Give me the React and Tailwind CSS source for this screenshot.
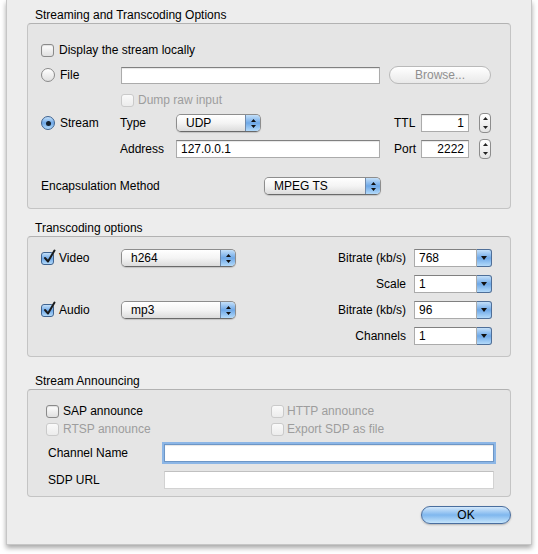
import clsx from "clsx";

const aquaBlue = "bg-linear-to-b from-[#c4e0f9] via-[#6ea8e7] to-[#b3dafa]";
const dimText = "text-[#9d9d9d]";

function Check({ checked, disabled }) {
  return (
    <span
      className={clsx(
        "relative block w-[13px] h-[13px] shrink-0 rounded-[3px] border",
        checked
          ? clsx("border-[#3f6390]", aquaBlue)
          : disabled
          ? "border-[#cacaca] bg-linear-to-b from-[#fafafa] to-[#ececec]"
          : "border-[#8a8a8a] bg-linear-to-b from-white to-[#e0e0e0] shadow-[inset_0_1px_1px_rgba(0,0,0,0.12)]"
      )}
    >
      {checked && (
        <svg className="absolute -top-[4px] left-[1px]" width="13" height="15" viewBox="0 0 13 15">
          <path d="M2 9 L5 12.5 L11.5 1.5" fill="none" stroke="#1b1b1b" strokeWidth="2" strokeLinecap="round" strokeLinejoin="round" />
        </svg>
      )}
    </span>
  );
}

function Radio({ on }) {
  return (
    <span
      className={clsx(
        "flex items-center justify-center w-[14px] h-[14px] shrink-0 rounded-full border",
        on ? clsx("border-[#3f6390]", aquaBlue) : "border-[#8a8a8a] bg-linear-to-b from-white to-[#e0e0e0]"
      )}
    >
      {on && <span className="w-[5px] h-[5px] rounded-full bg-[#15212e]" />}
    </span>
  );
}

function Field({ value, className, right, focus }) {
  return (
    <div
      className={clsx(
        "flex items-center bg-white border px-[4px] shadow-[inset_0_1px_1px_rgba(0,0,0,0.1)]",
        focus ? "border-[#6d96c6] ring-2 ring-[#8cb6e6]" : "border-[#ababab] border-t-[#808080]",
        right && "justify-end",
        className
      )}
    >
      {value}
    </div>
  );
}

function UpDown() {
  return (
    <svg width="5" height="9" viewBox="0 0 5 9">
      <path d="M2.5 0 L5 3 L0 3Z M0 6 L5 6 L2.5 9Z" fill="#111" />
    </svg>
  );
}

function Popup({ value, className }) {
  return (
    <div
      className={clsx(
        "flex h-[18px] rounded-[5px] border border-[#8d8d8d] border-b-[#6a6a6a] overflow-hidden shadow-[0_1px_1px_rgba(0,0,0,0.15)]",
        className
      )}
    >
      <div className="flex-1 flex items-center pl-[9px] bg-linear-to-b from-white via-[#f4f4f4] to-[#dcdcdc]">{value}</div>
      <div className={clsx("w-[15px] flex items-center justify-center border-l border-[#6f89aa]", aquaBlue)}>
        <UpDown />
      </div>
    </div>
  );
}

function Combo({ value }) {
  return (
    <div className="flex h-[18px] w-[78px]">
      <div className="flex-1 flex items-center pl-[4px] bg-white border border-[#ababab] border-t-[#808080]">{value}</div>
      <div className={clsx("w-[15px] flex items-center justify-center rounded-r-[3px] border border-l-0 border-[#4f6f98]", aquaBlue)}>
        <svg width="6" height="4" viewBox="0 0 6 4">
          <path d="M0 0 L6 0 L3 4Z" fill="#111" />
        </svg>
      </div>
    </div>
  );
}

function Stepper() {
  return (
    <div className="flex flex-col items-center justify-between w-[12px] h-[20px] py-[3px] rounded-[4px] border border-[#8d8d8d] bg-linear-to-b from-white to-[#e4e4e4]">
      <svg width="5" height="3" viewBox="0 0 5 3">
        <path d="M2.5 0 L5 3 L0 3Z" fill="#222" />
      </svg>
      <svg width="5" height="3" viewBox="0 0 5 3">
        <path d="M0 0 L5 0 L2.5 3Z" fill="#222" />
      </svg>
    </div>
  );
}

function GroupTitle({ children, className }) {
  return <div className={clsx("h-[16px] pl-[8px] leading-[16px]", className)}>{children}</div>;
}

function GroupBox({ className, children }) {
  return (
    <div className={clsx("rounded-[4px] border border-[#c4c4c4] border-t-[#b2b2b2] bg-[#e5e5e5]", className)}>
      {children}
    </div>
  );
}

export default function App() {
  return (
    <div className="w-[538px] h-[554px] bg-white overflow-hidden font-['Liberation_Sans',Arial,sans-serif] text-[12px] text-black">
      <div className="ml-[6px] w-[526px] h-[545px] bg-[#ededed] border-x border-b border-[#c6c6c6] px-[20px] pt-[7px] shadow-[0_3px_5px_rgba(0,0,0,0.35)]">
        {/* Streaming and Transcoding Options */}
        <GroupTitle>Streaming and Transcoding Options</GroupTitle>
        <GroupBox className="h-[186px] pl-[13px] pr-[19px] pt-[16px] flex flex-col">
          <div className="flex items-center h-[20px] gap-[5px]">
            <Check />
            <span>Display the stream locally</span>
          </div>
          <div className="mt-[5px] flex items-center h-[20px]">
            <div className="w-[80px] flex items-center gap-[5px]">
              <Radio />
              <span>File</span>
            </div>
            <Field className="w-[259px] h-[17px]" />
            <div className="ml-[9px] w-[102px] h-[18px] rounded-full border border-[#b9b9b9] bg-linear-to-b from-white to-[#e9e9e9] flex items-center justify-center text-[#8f8f8f]">
              Browse...
            </div>
          </div>
          <div className="mt-[5px] flex items-center h-[20px] pl-[80px] gap-[4px]">
            <Check disabled />
            <span className={dimText}>Dump raw input</span>
          </div>
          <div className="mt-[3px] flex items-center h-[20px]">
            <div className="w-[79px] flex items-center gap-[5px]">
              <Radio on />
              <span>Stream</span>
            </div>
            <span className="w-[56px]">Type</span>
            <Popup value="UDP" className="w-[85px]" />
            <div className="flex-1" />
            <span className="w-[27px]">TTL</span>
            <Field value="1" right className="w-[48px] h-[18px]" />
            <div className="ml-[10px]">
              <Stepper />
            </div>
          </div>
          <div className="mt-[6px] flex items-center h-[20px] pl-[79px]">
            <span className="w-[56px]">Address</span>
            <Field value="127.0.0.1" className="w-[204px] h-[18px]" />
            <div className="flex-1" />
            <span className="w-[27px]">Port</span>
            <Field value="2222" right className="w-[48px] h-[18px]" />
            <div className="ml-[10px]">
              <Stepper />
            </div>
          </div>
          <div className="mt-[17px] flex items-center h-[20px]">
            <span className="w-[223px]">Encapsulation Method</span>
            <Popup value="MPEG TS" className="w-[117px]" />
          </div>
        </GroupBox>

        {/* Transcoding options */}
        <GroupTitle className="mt-[11px]">Transcoding options</GroupTitle>
        <GroupBox className="h-[121px] pl-[13px] pr-[18px] pt-[8px]">
          <div className="grid grid-cols-[80px_115px_1fr_78px] grid-rows-[repeat(4,26px)] items-center">
            <div className="flex items-center gap-[5px]">
              <Check checked />
              <span>Video</span>
            </div>
            <Popup value="h264" />
            <span className="text-right pr-[8px]">Bitrate (kb/s)</span>
            <Combo value="768" />

            <div />
            <div />
            <span className="text-right pr-[8px]">Scale</span>
            <Combo value="1" />

            <div className="flex items-center gap-[5px]">
              <Check checked />
              <span>Audio</span>
            </div>
            <Popup value="mp3" />
            <span className="text-right pr-[8px]">Bitrate (kb/s)</span>
            <Combo value="96" />

            <div />
            <div />
            <span className="text-right pr-[8px]">Channels</span>
            <Combo value="1" />
          </div>
        </GroupBox>

        {/* Stream Announcing */}
        <GroupTitle className="mt-[16px]">Stream Announcing</GroupTitle>
        <GroupBox className="h-[108px] pl-[18px] pr-[15px] pt-[12px] flex flex-col">
          <div className="flex items-center h-[18px]">
            <div className="w-[225px] flex items-center gap-[4px]">
              <Check />
              <span>SAP announce</span>
            </div>
            <div className="flex items-center gap-[3px]">
              <Check disabled />
              <span className={dimText}>HTTP announce</span>
            </div>
          </div>
          <div className="flex items-center h-[18px]">
            <div className="w-[225px] flex items-center gap-[4px]">
              <Check disabled />
              <span className={dimText}>RTSP announce</span>
            </div>
            <div className="flex items-center gap-[3px]">
              <Check disabled />
              <span className={dimText}>Export SDP as file</span>
            </div>
          </div>
          <div className="mt-[5px] flex items-center h-[20px] pl-[2px]">
            <span className="w-[116px]">Channel Name</span>
            <Field focus className="w-[330px] h-[18px]" />
          </div>
          <div className="mt-[8px] flex items-center h-[18px] pl-[2px]">
            <span className="w-[116px]">SDP URL</span>
            <Field className="w-[330px] h-[18px] border-[#d2d2d2] border-t-[#c0c0c0] shadow-none" />
          </div>
        </GroupBox>

        <div className="mt-[9px] flex justify-end">
          <div className="w-[90px] h-[18px] rounded-full border border-[#4a6e9e] bg-linear-to-b from-[#d3e8fb] via-[#7fb7ee] to-[#c6e5fb] flex items-center justify-center shadow-[0_1px_2px_rgba(0,0,0,0.25)]">
            OK
          </div>
        </div>
      </div>
    </div>
  );
}
